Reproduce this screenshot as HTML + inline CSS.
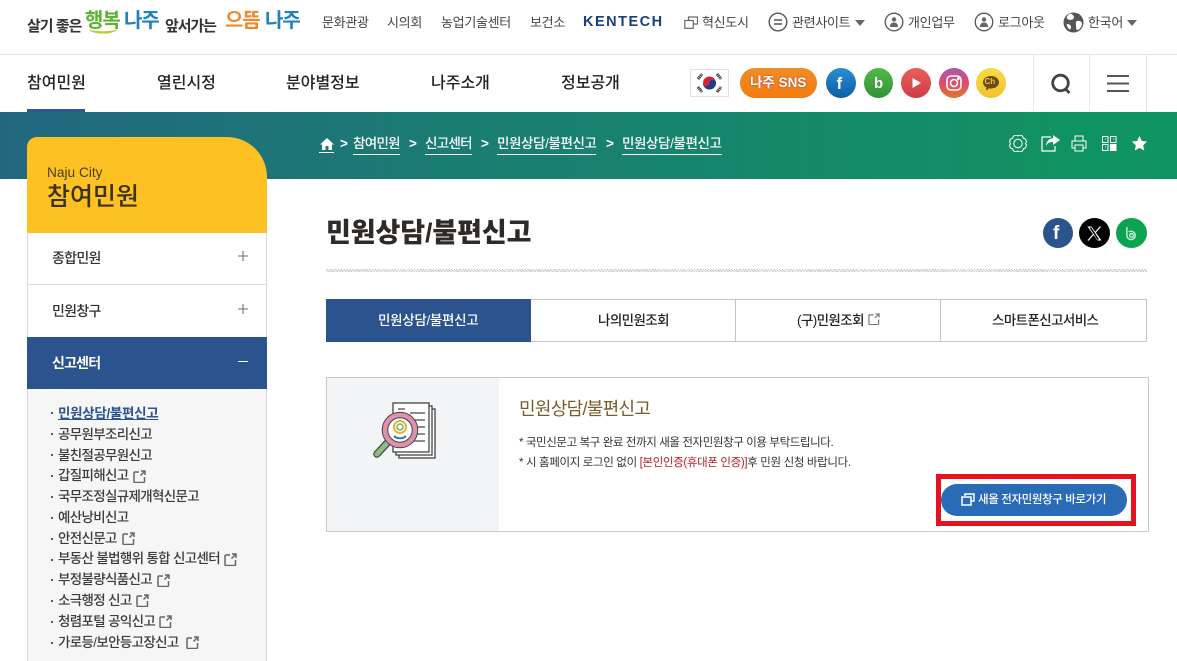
<!DOCTYPE html>
<html lang="ko"><head><meta charset="utf-8"><title>민원상담/불편신고</title>
<style>
html,body{margin:0;padding:0;background:#fff}
#p{position:relative;width:1177px;height:661px;overflow:hidden;background:#fff;font-family:"Liberation Sans","Noto Sans CJK KR",sans-serif;color:#333}
#p div,#p span.t,#p svg{position:absolute}
.t{white-space:nowrap;line-height:1}
.top{font-size:13px;top:16px;color:#444;letter-spacing:-.3px}
.gn{font-size:16px;top:75.5px;color:#222;font-weight:500;letter-spacing:0}
.lm{font-size:13.5px;color:#3c3c3c;left:58px;letter-spacing:-.67px;font-weight:500}
.dot{left:51px;width:2px;height:2px;background:#2b6a8a}
.bc{font-size:13.5px;top:137px;color:#fff;font-weight:500;letter-spacing:-.7px}
.ul{height:1px;background:#fff;top:154px}
.tab{font-size:13.5px;top:314px;color:#222;font-weight:500;letter-spacing:-.6px}
</style></head><body><div id="p">

<!-- top bar -->
<span class="t" style="left:27px;top:18.500px;font-size:15px;font-weight:700;color:#333;letter-spacing:-1px">살기 좋은</span>
<span class="t" style="left:85px;top:11px;font-size:20px;font-weight:700;color:#5bb531;letter-spacing:-1px">행복</span>
<svg style="left:88px;top:29px" width="30" height="6" viewBox="0 0 30 6"><path d="M1 1c7 4.500 21 4.500 28 0-7 2-21 2-28 0z" fill="#b3cf3a" stroke="#b3cf3a" stroke-width=".6"/></svg>
<span class="t" style="left:124px;top:11px;font-size:20px;font-weight:700;color:#1f84bd;letter-spacing:-1px">나주</span>
<span class="t" style="left:165px;top:18.500px;font-size:15px;font-weight:700;color:#333;letter-spacing:-1.100px">앞서가는</span>
<span class="t" style="left:225px;top:11px;font-size:20px;font-weight:700;color:#ee8a2c;letter-spacing:-1px">으뜸</span>
<span class="t" style="left:265px;top:11px;font-size:20px;font-weight:700;color:#1f84bd;letter-spacing:-1px">나주</span>

<span class="t top" style="left:322px">문화관광</span>
<span class="t top" style="left:387px">시의회</span>
<span class="t top" style="left:441px">농업기술센터</span>
<span class="t top" style="left:530px">보건소</span>
<span class="t" style="left:583px;top:14.500px;font-size:14.500px;font-weight:700;color:#16407f;letter-spacing:1.500px">KENTECH</span>
<svg style="left:684px;top:16px" width="14" height="13" viewBox="0 0 14 13" fill="none" stroke="#666" stroke-width="1.200"><rect x="4.500" y="1" width="9" height="7"/><rect x=".8" y="4.500" width="8.500" height="7.800" fill="#fff"/></svg>
<span class="t top" style="left:702px">혁신도시</span>
<svg style="left:768px;top:12px" width="20" height="20" viewBox="0 0 20 20" fill="none" stroke="#555" stroke-width="1.400"><circle cx="10" cy="10" r="8.800"/><path d="M6 8h8M6 12h8"/></svg>
<span class="t top" style="left:792px">관련사이트</span>
<svg style="left:855px;top:20px" width="10" height="6" viewBox="0 0 10 6"><path d="M0 0h10L5 6z" fill="#666"/></svg>
<svg style="left:884px;top:12px" width="20" height="20" viewBox="0 0 20 20" fill="none" stroke="#555" stroke-width="1.300"><circle cx="10" cy="10" r="8.800"/><circle cx="10" cy="7.500" r="2.200" fill="#666" stroke="none"/><path d="M6 15c0-3 1.500-4.500 4-4.500s4 1.500 4 4.500z" fill="#666" stroke="none"/></svg>
<span class="t top" style="left:908px">개인업무</span>
<svg style="left:974px;top:12px" width="20" height="20" viewBox="0 0 20 20" fill="none" stroke="#555" stroke-width="1.300"><circle cx="10" cy="10" r="8.800"/><circle cx="10" cy="7.500" r="2.200" fill="#666" stroke="none"/><path d="M6 15c0-3 1.500-4.500 4-4.500s4 1.500 4 4.500z" fill="#666" stroke="none"/></svg>
<span class="t top" style="left:998px">로그아웃</span>
<svg style="left:1063px;top:12px" width="21" height="21" viewBox="0 0 21 21"><circle cx="10.500" cy="10.500" r="10" fill="#555"/><path d="M7 1.500c3 1 5 3 3.500 5S6 8 4.500 7 4 3 7 1.500zM14 9c3-1 5 1 5 3s-2 5-4 6-2-3-2-5-.500-3.500 1-4zM4 12c2 0 4 1 4 3s-1 3-2 2-3-4-2-5z" fill="#fff"/></svg>
<span class="t top" style="left:1088px">한국어</span>
<svg style="left:1127px;top:20px" width="10" height="6" viewBox="0 0 10 6"><path d="M0 0h10L5 6z" fill="#666"/></svg>

<div style="left:0;top:54px;width:1177px;height:1px;background:#e2e2e2"></div>

<!-- main nav -->
<span class="t gn" style="left:27px">참여민원</span>
<span class="t gn" style="left:157px">열린시정</span>
<span class="t gn" style="left:286px">분야별정보</span>
<span class="t gn" style="left:431px">나주소개</span>
<span class="t gn" style="left:561px">정보공개</span>
<div style="left:27px;top:109px;width:58px;height:3px;background:#2b5a8e"></div>

<!-- flag -->
<div style="left:690px;top:69px;width:39px;height:28px;border:1px solid #e2e2e2;box-sizing:border-box;background:#fff"></div>
<svg style="left:690px;top:69px" width="39" height="28" viewBox="0 0 39 28"><circle cx="19.500" cy="14" r="6.500" fill="#d2253c"/><path d="M13 14a6.500 6.500 0 0 0 13 0 3.250 3.250 0 0 0-6.500 0 3.250 3.250 0 0 1-6.500 0z" fill="#1d3f8f"/><g stroke="#333" stroke-width="3" stroke-dasharray="1.300 .6"><path d="M8 10l4-5M27 5l4 5M8 18l4 5M27 23l4-5"/></g></svg>

<!-- SNS -->
<div style="left:740px;top:68px;width:77px;height:30px;border-radius:15px;background:linear-gradient(180deg,#ef8d26,#f37a12)"></div>
<span class="t" style="left:750px;top:76px;font-size:13.500px;font-weight:700;color:#fff;text-shadow:0 0 2px #a44">나주 SNS</span>
<div style="left:826px;top:68px;width:30px;height:30px;border-radius:50%;background:linear-gradient(180deg,#2a8fd0,#0a5fa6)"></div>
<span class="t" style="left:836.500px;top:75px;font-size:17px;font-weight:700;color:#fff">f</span>
<div style="left:864px;top:68px;width:29px;height:30px;border-radius:50%;background:linear-gradient(180deg,#55b848,#2f9338)"></div>
<span class="t" style="left:874px;top:76px;font-size:15px;font-weight:700;color:#fff">b</span>
<div style="left:901px;top:68px;width:30px;height:30px;border-radius:50%;background:linear-gradient(180deg,#e8605c,#cf3b42)"></div>
<svg style="left:901px;top:68px" width="30" height="30" viewBox="0 0 30 30"><path d="M11.500 10l8.500 5-8.500 5z" fill="#fff"/></svg>
<div style="left:939px;top:68px;width:30px;height:30px;border-radius:50%;background:linear-gradient(180deg,#a75bb0 0%,#e0486a 50%,#e8762c 100%)"></div>
<svg style="left:939px;top:68px" width="30" height="30" viewBox="0 0 30 30" fill="none" stroke="#fff" stroke-width="1.600"><rect x="8" y="8" width="14" height="14" rx="4"/><circle cx="15" cy="15" r="3.500"/><circle cx="19.300" cy="10.700" r=".6" fill="#fff"/></svg>
<div style="left:976px;top:68px;width:30px;height:30px;border-radius:50%;background:linear-gradient(180deg,#f6dc46,#f3c22c)"></div>
<svg style="left:976px;top:68px" width="30" height="30" viewBox="0 0 30 30"><path d="M15 8c-4.700 0-8 2.800-8 6.300 0 2.300 1.400 4.200 3.500 5.300l-.7 3.200 3.400-2.400c.6.100 1.200.2 1.800.2 4.700 0 8-2.900 8-6.300S19.700 8 15 8z" fill="#6b4a1c"/></svg>
<span class="t" style="left:984.500px;top:78px;font-size:8px;font-weight:700;color:#f3c22c">Ch</span>

<!-- search / menu -->
<div style="left:1033px;top:55px;width:1px;height:57px;background:#e6e6e6"></div>
<div style="left:1089px;top:55px;width:1px;height:57px;background:#e6e6e6"></div>
<div style="left:1146px;top:55px;width:1px;height:57px;background:#e6e6e6"></div>
<svg style="left:1050px;top:73px" width="23" height="23" viewBox="0 0 23 23" fill="none" stroke="#444" stroke-width="2.800"><circle cx="10.500" cy="10" r="7.800"/><path d="M15.500 16l4 4"/></svg>
<svg style="left:1107px;top:74px" width="22" height="19" viewBox="0 0 22 19" fill="none" stroke="#555" stroke-width="2"><path d="M0 2h22M0 9.500h22M0 17h22"/></svg>

<!-- banner -->
<div style="left:0;top:112px;width:1177px;height:67px;background:linear-gradient(90deg,#22677f 0%,#1a7d72 40%,#0f9660 100%)"></div>

<svg style="left:320px;top:138px" width="14" height="12" viewBox="0 0 14 12"><path d="M7 0L0 6.500h2V12h3.500V8h3v4H12V6.500h2z" fill="#fff"/></svg>
<div class="ul" style="left:319px;width:15px;top:152px"></div>
<span class="t bc" style="left:340px;font-weight:700">&gt;</span><span class="t bc" style="left:353px">참여민원</span><div class="ul" style="left:353px;width:47px"></div>
<span class="t bc" style="left:409px;font-weight:700">&gt;</span><span class="t bc" style="left:425px">신고센터</span><div class="ul" style="left:425px;width:47px"></div>
<span class="t bc" style="left:481px;font-weight:700">&gt;</span><span class="t bc" style="left:497px;letter-spacing:-.4px">민원상담/불편신고</span><div class="ul" style="left:497px;width:99px"></div>
<span class="t bc" style="left:606px;font-weight:700">&gt;</span><span class="t bc" style="left:622px;letter-spacing:-.4px">민원상담/불편신고</span><div class="ul" style="left:622px;width:100px"></div>

<!-- banner tools -->
<svg style="left:1009px;top:135px" width="18" height="17" viewBox="0 0 18 17" fill="none" stroke="#fff" stroke-width="1"><circle cx="9" cy="8.500" r="4.200"/><path d="M16.500 8.500A3.200 3.200 0 0 1 14.300 13.800A3.200 3.200 0 0 1 9 16A3.200 3.200 0 0 1 3.700 13.800A3.200 3.200 0 0 1 1.500 8.500A3.200 3.200 0 0 1 3.700 3.200A3.200 3.200 0 0 1 9 1A3.200 3.200 0 0 1 14.300 3.200A3.200 3.200 0 0 1 16.500 8.500z"/></svg>
<svg style="left:1041px;top:135px" width="19" height="17" viewBox="0 0 19 17"><path d="M10 2H1v14h13v-5" fill="none" stroke="#fff" stroke-width="1.200"/><path d="M12 0l7 5-7 5V7C9 7 6.500 8 5 11c.5-5 3-7.500 7-7.800z" fill="#fff"/></svg>
<svg style="left:1071px;top:135px" width="16" height="17" viewBox="0 0 16 17" fill="none" stroke="#fff" stroke-width="1"><path d="M4 6V1h8v5M3.500 13H1V6h14v7h-2.500"/><rect x="4" y="10" width="8" height="6"/></svg>
<svg style="left:1102px;top:136px" width="15" height="15" viewBox="0 0 15 15" fill="none" stroke="#fff" stroke-width="1"><rect x=".5" y=".5" width="5.500" height="6"/><rect x="8.500" y=".5" width="5.500" height="6"/><rect x=".5" y="8.500" width="5.500" height="6"/><rect x="8" y="8" width="6.500" height="7" fill="#fff" stroke="none"/><path d="M3 3h.8M11 3h.8M3 11h.8"/></svg>
<svg style="left:1132px;top:136px" width="15" height="15" viewBox="0 0 15 15"><path d="M7.500 0l2.300 4.900 5.200.7-3.800 3.600 1 5.300-4.700-2.600-4.700 2.600 1-5.300L0 5.600l5.200-.7z" fill="#fff"/></svg>

<!-- sidebar -->
<div style="left:27px;top:137px;width:240px;height:96px;background:#fdc124;border-radius:10px 40px 0 0"></div>
<span class="t" style="left:47px;top:166px;font-size:13.700px;color:#4a3f1a">Naju City</span>
<span class="t" style="left:47px;top:184.500px;font-size:25px;color:#3a3318;font-weight:500">참여민원</span>
<div style="left:27px;top:233px;width:240px;height:428px;box-sizing:border-box;border-left:1px solid #d8d8d8;border-right:1px solid #d8d8d8;background:#fff"></div>
<div style="left:28px;top:284px;width:238px;height:1px;background:#dcdcdc"></div>
<span class="t" style="left:52px;top:251px;font-size:14px;font-weight:500;color:#333;letter-spacing:-.7px">종합민원</span>
<span class="t" style="left:52px;top:304px;font-size:14px;font-weight:500;color:#333;letter-spacing:-.7px">민원창구</span>
<svg style="left:238px;top:251px" width="10" height="10" viewBox="0 0 10 10"><path d="M5 0v10M0 5h10" stroke="#888" stroke-width="1.300"/></svg>
<svg style="left:238px;top:304px" width="10" height="10" viewBox="0 0 10 10"><path d="M5 0v10M0 5h10" stroke="#888" stroke-width="1.300"/></svg>
<div style="left:27px;top:337px;width:240px;height:52px;background:#2b538d"></div>
<span class="t" style="left:52px;top:355.500px;font-size:14px;font-weight:700;color:#fff;letter-spacing:-.8px">신고센터</span>
<div style="left:238px;top:361px;width:10px;height:1px;background:#fff"></div>
<div style="left:28px;top:389px;width:238px;height:272px;background:#f6f6f6"></div>

<div class="dot" style="top:412px"></div><span class="t lm" style="top:406.500px;color:#2b538d;font-weight:700;text-decoration:underline;letter-spacing:-.3px">민원상담/불편신고</span>
<div class="dot" style="top:433px"></div><span class="t lm" style="top:427.500px">공무원부조리신고</span>
<div class="dot" style="top:454px"></div><span class="t lm" style="top:448.500px">불친절공무원신고</span>
<div class="dot" style="top:475px"></div><span class="t lm" style="top:469px">갑질피해신고</span>
<div class="dot" style="top:496px"></div><span class="t lm" style="top:490px">국무조정실규제개혁신문고</span>
<div class="dot" style="top:517px"></div><span class="t lm" style="top:511px">예산낭비신고</span>
<div class="dot" style="top:538px"></div><span class="t lm" style="top:532px">안전신문고</span>
<div class="dot" style="top:559px"></div><span class="t lm" style="top:552px">부동산 불법행위 통합 신고센터</span>
<div class="dot" style="top:579px"></div><span class="t lm" style="top:573px">부정불량식품신고</span>
<div class="dot" style="top:600px"></div><span class="t lm" style="top:594px">소극행정 신고</span>
<div class="dot" style="top:621px"></div><span class="t lm" style="top:615px">청렴포털 공익신고</span>
<div class="dot" style="top:642px"></div><span class="t lm" style="top:636px">가로등/보안등고장신고</span>

<svg style="left:133px;top:470px" width="13" height="13" viewBox="0 0 13 13" fill="none" stroke="#666" stroke-width="1.500"><path d="M6 2H2a1 1 0 0 0-1 1v8.500a1 1 0 0 0 1 1h8.500a1 1 0 0 0 1-1V7M8 1h4v4M12 1L7.500 5.500"/></svg>
<svg style="left:122px;top:532px" width="13" height="13" viewBox="0 0 13 13" fill="none" stroke="#666" stroke-width="1.500"><path d="M6 2H2a1 1 0 0 0-1 1v8.500a1 1 0 0 0 1 1h8.500a1 1 0 0 0 1-1V7M8 1h4v4M12 1L7.500 5.500"/></svg>
<svg style="left:224px;top:553px" width="13" height="13" viewBox="0 0 13 13" fill="none" stroke="#666" stroke-width="1.500"><path d="M6 2H2a1 1 0 0 0-1 1v8.500a1 1 0 0 0 1 1h8.500a1 1 0 0 0 1-1V7M8 1h4v4M12 1L7.500 5.500"/></svg>
<svg style="left:157px;top:574px" width="13" height="13" viewBox="0 0 13 13" fill="none" stroke="#666" stroke-width="1.500"><path d="M6 2H2a1 1 0 0 0-1 1v8.500a1 1 0 0 0 1 1h8.500a1 1 0 0 0 1-1V7M8 1h4v4M12 1L7.500 5.500"/></svg>
<svg style="left:136px;top:594px" width="13" height="13" viewBox="0 0 13 13" fill="none" stroke="#666" stroke-width="1.500"><path d="M6 2H2a1 1 0 0 0-1 1v8.500a1 1 0 0 0 1 1h8.500a1 1 0 0 0 1-1V7M8 1h4v4M12 1L7.500 5.500"/></svg>
<svg style="left:159px;top:615px" width="13" height="13" viewBox="0 0 13 13" fill="none" stroke="#666" stroke-width="1.500"><path d="M6 2H2a1 1 0 0 0-1 1v8.500a1 1 0 0 0 1 1h8.500a1 1 0 0 0 1-1V7M8 1h4v4M12 1L7.500 5.500"/></svg>
<svg style="left:186px;top:636px" width="13" height="13" viewBox="0 0 13 13" fill="none" stroke="#666" stroke-width="1.500"><path d="M6 2H2a1 1 0 0 0-1 1v8.500a1 1 0 0 0 1 1h8.500a1 1 0 0 0 1-1V7M8 1h4v4M12 1L7.500 5.500"/></svg>

<!-- title -->
<span class="t" style="left:326px;top:220px;font-size:27px;font-weight:900;color:#2e2a28;letter-spacing:-.1px">민원상담/불편신고</span>
<div style="left:1043px;top:218px;width:30px;height:30px;border-radius:50%;background:#2b538d"></div>
<span class="t" style="left:1053px;top:224px;font-size:19px;font-weight:700;color:#fff">f</span>
<div style="left:1079px;top:218px;width:31px;height:30px;border-radius:50%;background:#000"></div>
<svg style="left:1087px;top:226px" width="15" height="15" viewBox="0 0 15 15"><path d="M.5.500h4l10 14h-4zM2.500 1.500l7.700 12h2L4.300 1.500z" fill="#fff" fill-rule="evenodd"/><path d="M13.500.500L8.300 6.500M1 14.500l5.700-6.500" stroke="#fff" stroke-width="1.200"/></svg>
<div style="left:1116px;top:218px;width:31px;height:30px;border-radius:50%;background:#0aa350"></div>
<svg style="left:1125px;top:226px" width="14" height="15" viewBox="0 0 15 16" fill="none" stroke="#cfeeda" stroke-width="1.500"><path d="M2 1v9a4.500 4.500 0 1 0 4.500-4.500c-1 0-2 .4-2.500 1"/><circle cx="7" cy="10" r="2"/></svg>
<div style="left:326px;top:269px;width:821px;height:3px;background:repeating-linear-gradient(45deg,#c4c4c4 0 1px,#fff 1px 2px)"></div>

<!-- tabs -->
<div style="left:326px;top:299px;width:821px;height:43px;box-sizing:border-box;border:1px solid #c4c4c4;background:#fff"></div>
<div style="left:326px;top:299px;width:205px;height:43px;background:#2b538d"></div>
<div style="left:735px;top:299px;width:1px;height:43px;background:#c4c4c4"></div>
<div style="left:940px;top:299px;width:1px;height:43px;background:#c4c4c4"></div>
<span class="t tab" style="left:378px;color:#fff;letter-spacing:-.3px">민원상담/불편신고</span>
<span class="t tab" style="left:598px">나의민원조회</span>
<span class="t tab" style="left:797px">(구)민원조회</span>
<svg style="left:868px;top:313px" width="12" height="12" viewBox="0 0 13 13" fill="none" stroke="#777" stroke-width="1.300"><path d="M6 2H2a1 1 0 0 0-1 1v8.500a1 1 0 0 0 1 1h8.500a1 1 0 0 0 1-1V7M8 1h4v4M12 1L7.500 5.500"/></svg>
<span class="t tab" style="left:992px">스마트폰신고서비스</span>

<!-- info box -->
<div style="left:326px;top:377px;width:823px;height:155px;box-sizing:border-box;border:1px solid #c9c9c9;background:#fff"></div>
<div style="left:327px;top:378px;width:172px;height:153px;background:#f3f4f6"></div>
<svg style="left:370px;top:400px" width="66" height="62" viewBox="0 0 66 62">
<rect x="29" y="9" width="36" height="49" fill="#fff" stroke="#444" stroke-width="1.300"/>
<rect x="26" y="6" width="36" height="49" fill="#fff" stroke="#444" stroke-width="1.300"/>
<rect x="23" y="3" width="36" height="49" fill="#fff" stroke="#444" stroke-width="1.300"/>
<path d="M28 9h7M40 13h15M44 20h11M46 27h9M46 34h9M44 41h11" stroke="#666" stroke-width="1.500" fill="none"/>
<path d="M7 54L20 40" stroke="#444" stroke-width="7.500" stroke-linecap="round"/>
<path d="M7 54L20 40" stroke="#8cbc7f" stroke-width="5" stroke-linecap="round"/>
<circle cx="30" cy="30" r="15" fill="#fff" stroke="#444" stroke-width="6.500"/>
<circle cx="30" cy="30" r="15" fill="none" stroke="#e08fae" stroke-width="4.500"/>
<circle cx="30" cy="27" r="6" fill="none" stroke="#e2b63a" stroke-width="2"/>
<circle cx="30" cy="27" r="3" fill="none" stroke="#6dbb5e" stroke-width="1.500"/>
<path d="M24 36c3 3 9 3 12 0" stroke="#2c7fb8" stroke-width="2" fill="none"/>
</svg>
<span class="t" style="left:519px;top:400px;font-size:18px;color:#7a5c28;letter-spacing:-.7px">민원상담/불편신고</span>
<span class="t" style="left:519px;top:438px;font-size:11.500px;color:#333;letter-spacing:-.4px">* 국민신문고 복구 완료 전까지 새올 전자민원창구 이용 부탁드립니다.</span>
<span class="t" style="left:519px;top:458px;font-size:11.500px;color:#333;letter-spacing:-.35px">* 시 홈페이지 로그인 없이 <span style="color:#b5202c">[본인인증(휴대폰 인증)]</span>후 민원 신청 바랍니다.</span>

<!-- button -->
<div style="left:936px;top:474px;width:200px;height:52px;box-sizing:border-box;border:5px solid #e3141f;background:#fff"></div>
<div style="left:941px;top:484px;width:186px;height:32px;border-radius:16px;background:#2a6bb8"></div>
<svg style="left:961px;top:493px" width="14" height="13" viewBox="0 0 14 13" fill="none" stroke="#fff" stroke-width="1.500"><path d="M4 3V1h9v7h-3"/><rect x="1" y="4" width="9" height="8"/></svg>
<span class="t" style="left:978px;top:495px;font-size:11.500px;color:#fff;letter-spacing:-.38px;font-weight:500">새올 전자민원창구 바로가기</span>

</div></body></html>
